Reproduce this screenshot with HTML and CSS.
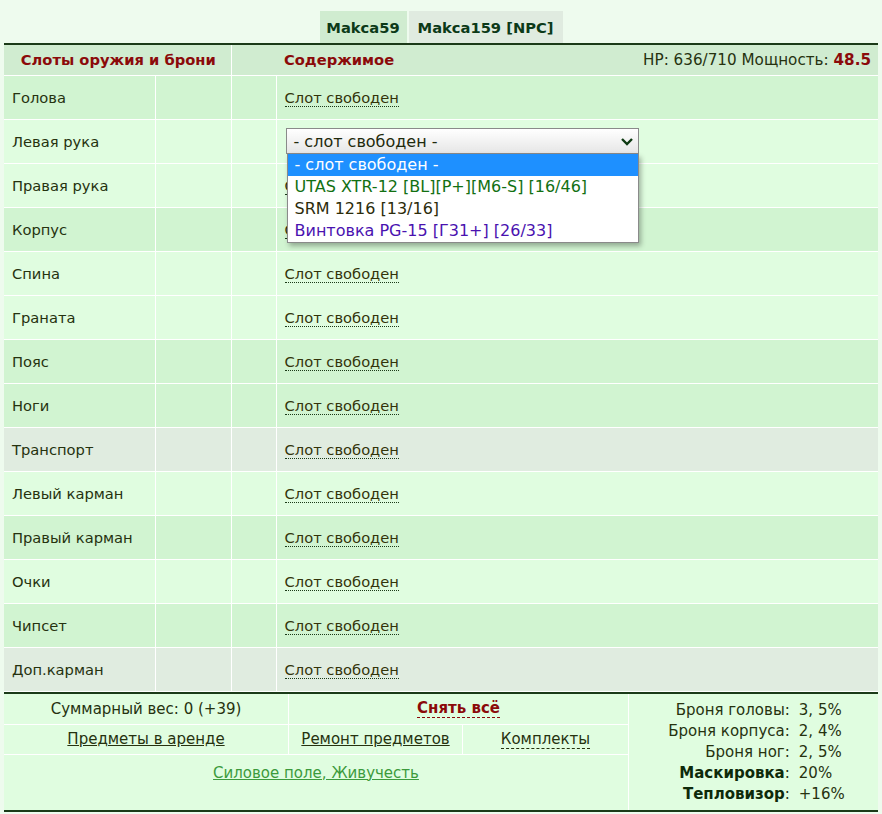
FILE: index.html
```html
<!DOCTYPE html>
<html lang="ru">
<head>
<meta charset="utf-8">
<title>Слоты</title>
<link rel="stylesheet" href="styles.css">
</head>
<body>
<div class="page">
  <div class="tabs">
    <span class="tab tab-active">Makca59</span>
    <span class="tab tab-other">Makca159 [NPC]</span>
  </div>
  <table class="slots">
    <colgroup>
      <col class="c1"><col class="c2"><col class="c3"><col class="c4">
    </colgroup>
    <thead>
      <tr class="head">
        <th colspan="2" class="h-slots">Слоты оружия и брони</th>
        <th class="h-gap"></th>
        <th class="h-content"><span class="h-title">Содержимое</span><span class="hp">HP: 636/710 Мощность: <b>48.5</b></span></th>
      </tr>
    </thead>
    <tbody>
      <tr class="dark"><td>Голова</td><td></td><td></td><td><a class="slot">Слот свободен</a></td></tr>
      <tr class="light"><td>Левая рука</td><td></td><td></td><td class="sel-cell">
        <div class="select-wrap">
          <div class="select">- слот свободен -
            <svg class="chev" width="14" height="10" viewBox="0 0 14 10"><path d="M2 2 L7 7 L12 2" fill="none" stroke="#0e3a12" stroke-width="2.4"/></svg>
          </div>
          <ul class="options">
            <li class="opt hl">- слот свободен -</li>
            <li class="opt green">UTAS XTR-12 [BL][P+][M6-S] [16/46]</li>
            <li class="opt plain">SRM 1216 [13/16]</li>
            <li class="opt purple">Винтовка PG-15 [Г31+] [26/33]</li>
          </ul>
        </div>
      </td></tr>
      <tr class="light"><td>Правая рука</td><td></td><td></td><td><a class="slot">Слот свободен</a></td></tr>
      <tr class="dark"><td>Корпус</td><td></td><td></td><td><a class="slot">Слот свободен</a></td></tr>
      <tr class="light"><td>Спина</td><td></td><td></td><td><a class="slot">Слот свободен</a></td></tr>
      <tr class="light"><td>Граната</td><td></td><td></td><td><a class="slot">Слот свободен</a></td></tr>
      <tr class="dark"><td>Пояс</td><td></td><td></td><td><a class="slot">Слот свободен</a></td></tr>
      <tr class="dark"><td>Ноги</td><td></td><td></td><td><a class="slot">Слот свободен</a></td></tr>
      <tr class="gray"><td>Транспорт</td><td></td><td></td><td><a class="slot">Слот свободен</a></td></tr>
      <tr class="light"><td>Левый карман</td><td></td><td></td><td><a class="slot">Слот свободен</a></td></tr>
      <tr class="dark"><td>Правый карман</td><td></td><td></td><td><a class="slot">Слот свободен</a></td></tr>
      <tr class="light"><td>Очки</td><td></td><td></td><td><a class="slot">Слот свободен</a></td></tr>
      <tr class="dark"><td>Чипсет</td><td></td><td></td><td><a class="slot">Слот свободен</a></td></tr>
      <tr class="gray"><td>Доп.карман</td><td></td><td></td><td><a class="slot">Слот свободен</a></td></tr>
    </tbody>
  </table>
  <div class="footer">
    <div class="f-left">
      <div class="f-row r1">
        <div class="f-cell w1">Суммарный вес: 0 (+39)</div>
        <div class="f-cell w2"><a class="remove">Снять всё</a></div>
      </div>
      <div class="f-row r2">
        <div class="f-cell w1"><a class="ul">Предметы в аренде</a></div>
        <div class="f-cell w3"><a class="ul">Ремонт предметов</a></div>
        <div class="f-cell w4"><a class="dash">Комплекты</a></div>
      </div>
      <div class="f-row r3">
        <a class="green-link">Силовое поле, Живучесть</a>
      </div>
    </div>
    <div class="f-right">
      <table class="stats">
        <tr><td class="lbl">Броня головы:</td><td>3, 5%</td></tr>
        <tr><td class="lbl">Броня корпуса:</td><td>2, 4%</td></tr>
        <tr><td class="lbl">Броня ног:</td><td>2, 5%</td></tr>
        <tr><td class="lbl"><b>Маскировка</b>:</td><td>20%</td></tr>
        <tr><td class="lbl"><b>Тепловизор</b>:</td><td>+16%</td></tr>
      </table>
    </div>
  </div>
</div>
</body>
</html>
```

FILE: styles.css
```css
* { box-sizing: border-box; }
html, body { margin: 0; padding: 0; }
body {
  background: #eefbee;
  font-family: "DejaVu Sans", Verdana, sans-serif;
  font-size: 14.7px;
  color: #26320f;
}
.page { padding: 11px 4px 0 4px; width: 882px; }

.tabs { display: flex; justify-content: center; gap: 2px; height: 32px; }
.tab {
  display: flex; align-items: center; justify-content: center;
  font-weight: bold; color: #0c3a18; font-size: 14.7px;
}
.tab-active { background: #d0ecd0; width: 87px; }
.tab-other { background: #e0ebe0; width: 154px; }

.slots {
  width: 874px;
  border-collapse: collapse;
  border-top: 2px solid #1b3a18;
  table-layout: fixed;
}
.c1 { width: 151px; } .c2 { width: 76px; } .c3 { width: 45px; } .c4 { width: 602px; }
.slots td, .slots th {
  border-right: 1px solid #fff;
  border-bottom: 1px solid #fff;
  padding: 0 8px;
  height: 44px;
  text-align: left;
  font-weight: normal;
}
.slots td:last-child, .slots th:last-child { border-right: 0; }
.slots .head th { background: #d0ecd0; height: 31px; }
.slots .head th.h-gap { border-right: 0; }
.slots th.h-slots { color: #8b0a0a; font-weight: bold; text-align: center; padding-left: 10px; }
.h-title { color: #8b0a0a; font-weight: bold; float: left; }
.hp { float: right; margin-right: -1px; font-size: 15.2px; }
.hp b { color: #8b0a0a; }

.dark td { background: #d1f4d1; }
.light td { background: #e0fde0; }
.gray td { background: #e0ece0; }

.slot {
  color: #33330a;
  text-decoration: none;
  border-bottom: 1px dotted #1b3a18;
}

.slots td.sel-cell { padding-left: 9px; }
.select-wrap { position: relative; }
.select {
  position: relative;
  width: 353px; height: 26px;
  border: 1px solid #8a8a8a;
  background: linear-gradient(#ffffff, #e6e6e6);
  font-size: 16px;
  color: #1f2a0c;
  padding: 3px 0 0 7px;
}
.chev { position: absolute; right: 4px; top: 8px; }
.options {
  position: absolute; left: 1px; top: 26px;
  width: 352px;
  margin: 0; padding: 0;
  list-style: none;
  background: #fff;
  border: 1px solid #8a8a8a;
  border-top: 0;
  box-shadow: 2px 3px 5px rgba(0,0,0,0.3);
  font-size: 16px;
  z-index: 5;
}
.opt { height: 22px; line-height: 22px; padding-left: 7px; }
.opt.hl { background: #1e90ff; color: #fff; }
.opt.green { color: #127012; }
.opt.plain { color: #2c2c0a; }
.opt.purple { color: #4a12b0; }

.footer {
  width: 874px;
  display: flex;
  background: #e0fde0;
  border-top: 2px solid #1b3a18;
  border-bottom: 2px solid #1b3a18;
  height: 120px;
  font-size: 15px;
}
.f-left { width: 625px; border-right: 1px solid #fff; display: flex; flex-direction: column; }
.f-right { flex: 1; display: flex; justify-content: center; padding-top: 6px; padding-left: 6px; }
.f-row { display: flex; border-bottom: 1px solid #fff; }
.f-row.r1 { height: 31px; }
.f-row.r2 { height: 30px; }
.f-row.r3 { border-bottom: 0; flex: 1; justify-content: center; padding-top: 9px; }
.f-cell { display: flex; align-items: center; justify-content: center; }
.w1 { width: 285px; border-right: 1px solid #fff; }
.w2 { flex: 1; }
.w3 { width: 174px; border-right: 1px solid #fff; }
.w4 { flex: 1; }
.ul { color: #26320f; text-decoration: underline; }
.dash { color: #26320f; text-decoration: none; border-bottom: 1px dashed #26320f; }
.remove { color: #8b0a0a; font-weight: bold; text-decoration: none; border-bottom: 1px dashed #8b0a0a; }
.green-link { color: #3c9a3c; text-decoration: underline; }

.stats { border-collapse: collapse; height: fit-content; }
.stats td { padding: 0; height: 21px; line-height: 21px; }
.stats td.lbl { text-align: right; padding-right: 9px; }
.stats b { color: #0e2a0a; }
```
